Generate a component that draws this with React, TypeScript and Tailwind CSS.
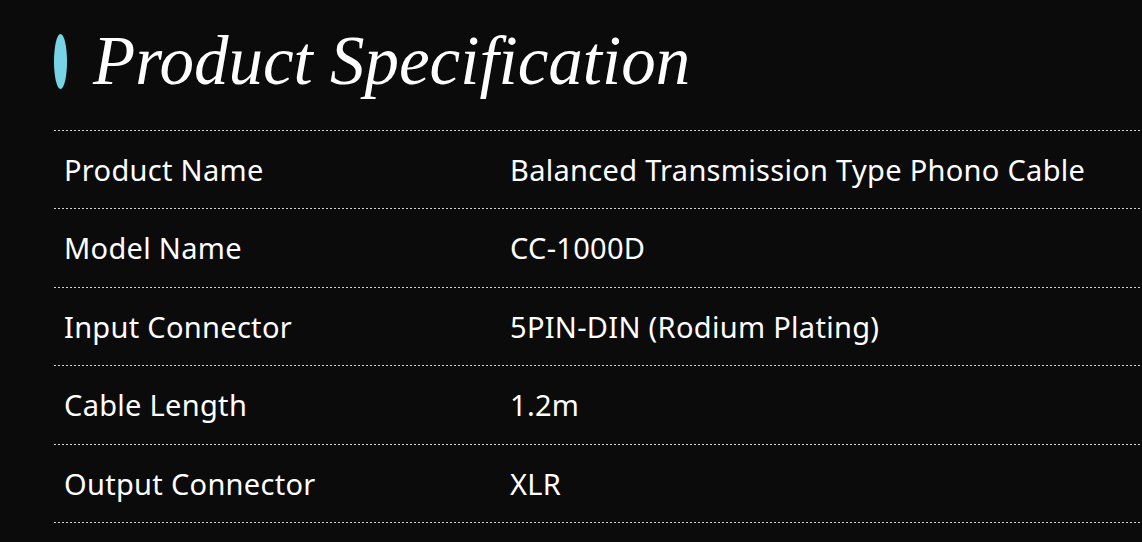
const rows = [
  ['Product Name', 'Balanced Transmission Type Phono Cable'],
  ['Model Name', 'CC-1000D'],
  ['Input Connector', '5PIN-DIN (Rodium Plating)'],
  ['Cable Length', '1.2m'],
  ['Output Connector', 'XLR'],
];

function Dots() {
  return (
    <div className="h-px w-full bg-[linear-gradient(to_right,#d2d2d2_2px,transparent_2px)] bg-[length:4px_1px] bg-repeat-x" />
  );
}

export default function App() {
  return (
    <div className="min-h-screen w-full bg-[#0b0b0b] text-white overflow-hidden">
      <div className="pl-[54px] pt-[34px]">
        <h2 className="flex items-center gap-[26px] h-[55px]">
          <span className="block w-[13px] h-[55px] rounded-[50%] bg-[#77d4e6]" />
          <span className="text-[69px] leading-none italic text-white [font-family:'Liberation_Serif',serif]">
            Product Specification
          </span>
        </h2>
        <div className="mt-[41px] [font-family:'Noto_Sans',sans-serif] text-[29px] tracking-[0.3px]">
          <Dots />
          {rows.map(([label, value]) => (
            <div key={label}>
              <div className="flex items-center h-[77.4px]">
                <div className="w-[456px] pl-[10px]">{label}</div>
                <div>{value}</div>
              </div>
              <Dots />
            </div>
          ))}
        </div>
      </div>
    </div>
  );
}
